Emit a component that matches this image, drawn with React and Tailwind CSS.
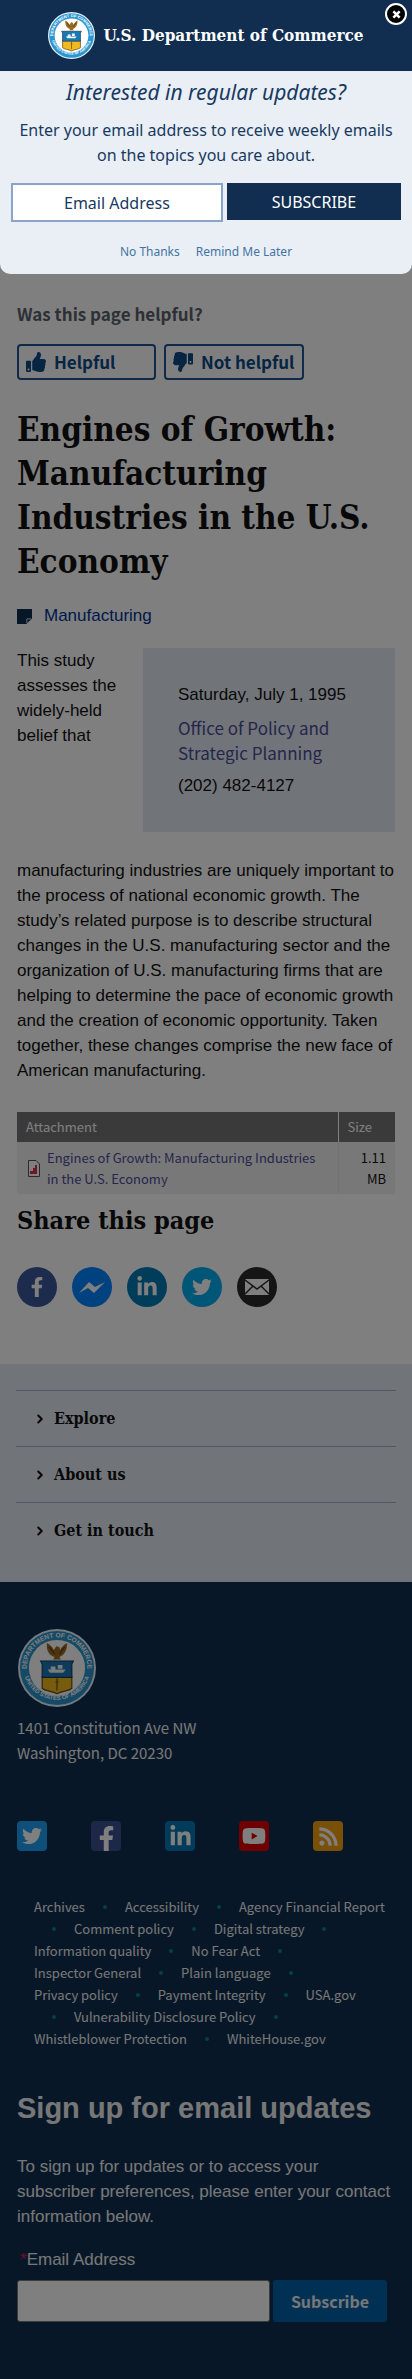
import { FaFacebookF, FaLinkedinIn, FaTwitter, FaYoutube, FaRss, FaThumbsUp, FaThumbsDown } from "react-icons/fa";
import { ChevronRight } from "lucide-react";

const serif = "font-['DejaVu_Serif_Condensed','DejaVu_Serif',serif]";
const source = "font-['Noto_Sans_CJK_SC',sans-serif]";

function Seal({ id, className }) {
  return (
    <svg viewBox="0 0 100 100" className={className} role="img" aria-label="Department of Commerce seal">
      <defs>
        <path id={id + "-top"} d="M11.500 56 A39 39 0 1 1 88.500 56" />
        <path id={id + "-bottom"} d="M9 62 A43.500 43.500 0 0 0 91 62" />
      </defs>
      <circle cx="50" cy="50" r="50" fill="#e9f4fa" />
      <circle cx="50" cy="50" r="47.500" fill="#2b95cf" />
      <circle cx="50" cy="50" r="36" fill="#fff" />
      <g fill="#fff" fontSize="8.500" fontWeight="700" fontFamily="Liberation Sans, sans-serif" textAnchor="middle">
        <text><textPath href={"#" + id + "-top"} startOffset="50%">DEPARTMENT OF COMMERCE</textPath></text>
        <text fontSize="7.500"><textPath href={"#" + id + "-bottom"} startOffset="50%">UNITED STATES OF AMERICA</textPath></text>
      </g>
      <path d="M37 18 C41 20 44 23 46 27 L49 22 L53 23 L54 27 C56 23 59 20 63 18 C63 28 59 34 53 36 L55 39 H45 L47 36 C40 34 36 28 37 18 Z" fill="#9a6a25" />
      <path d="M40 23 L47 32 M60 23 L53 32" stroke="#5b3c14" strokeWidth="1.500" />
      <path d="M31 61 H69 V76 C65 80 57 79 50 83 C43 79 35 80 31 76 Z" fill="#f0b91d" stroke="#5b4a1c" strokeWidth="1.500" />
      <path d="M29 41 H71 L69 45 V62 H31 V45 Z" fill="#1a79b5" stroke="#173d5c" strokeWidth="1.500" />
      <path d="M38 52 H61 L58 56 H41 Z M42 48 H48 V52 H42 Z M51 46 H57 V51 H51 Z" fill="#f2f6f8" />
      <path d="M50 63 V79 M48 68 H52" stroke="#8a6413" strokeWidth="2" />
    </svg>
  );
}

function Popup() {
  return (
    <section role="dialog" aria-label="Email updates" className="absolute inset-x-0 top-0 z-20 overflow-hidden rounded-b-[10px] bg-[#e9eff5] pb-3 text-center font-['Noto_Sans',sans-serif] text-[#183a62]">
      <header className="flex h-[71px] items-center justify-center gap-2 bg-[#112e51]">
        <Seal id="popup-seal" className="size-[47px]" />
        <span className={`${serif} text-[17px] font-bold text-white`}>U.S. Department of Commerce</span>
      </header>
      <button type="button" aria-label="Close" className="absolute top-[3px] right-[5px] flex size-[22px] items-center justify-center rounded-full border-2 border-white bg-black">
        <svg viewBox="0 0 10 10" className="size-[9px]"><path d="M1.500 1.500 L8.500 8.500 M8.500 1.500 L1.500 8.500" stroke="#fff" strokeWidth="2.800" /></svg>
      </button>
      <h2 className="mt-[7px] text-[21px] leading-[28px] italic">Interested in regular updates?</h2>
      <p className="mt-3 px-2 text-[16px] leading-[25px]">Enter your email address to receive weekly emails on the topics you care about.</p>
      <form className="mt-[15px] flex items-start gap-1 px-[11px]" onSubmit={(e) => e.preventDefault()}>
        <input type="email" aria-label="Email Address" placeholder="Email Address" className="h-[39px] w-0 flex-[210] border-2 border-[#8ba4c9] bg-white text-center text-[16px] placeholder:text-[#183a62]" />
        <button type="submit" className="h-[37px] flex-[176] bg-[#112e51] text-[16px] text-white">SUBSCRIBE</button>
      </form>
      <div className="mt-5 flex justify-center gap-4 text-[12px] leading-5 text-[#4474a3]">
        <a href="#no">No Thanks</a>
        <a href="#later">Remind Me Later</a>
      </div>
    </section>
  );
}

const share = [
  ["Facebook", "bg-[#3b5998]", <FaFacebookF className="size-5" />],
  ["Messenger", "bg-[#0084ff]", <svg viewBox="0 0 28 14" className="w-7" fill="currentColor"><path d="M1 13 L11 2 L17 7 L27 2 L16 13 L10 8 Z" /></svg>],
  ["LinkedIn", "bg-[#007bb5]", <FaLinkedinIn className="size-[22px]" />],
  ["Twitter", "bg-[#00aced]", <FaTwitter className="size-5" />],
  ["Email", "bg-[#2b2b2b]", <svg viewBox="0 0 26 18" className="w-[26px]"><rect x="1" y="1" width="24" height="16" rx="1" fill="#fff" /><path d="M1 2 L13 11 L25 2 M1 16 L9 8 M25 16 L17 8" fill="none" stroke="#2b2b2b" strokeWidth="1.500" /></svg>],
];

const social = [
  ["Twitter", "bg-[#1da1f2]", <FaTwitter className="size-5" />],
  ["Facebook", "bg-[#3b4f8f]", <FaFacebookF className="mt-[5px] size-[25px]" />],
  ["LinkedIn", "bg-[#0077b5]", <FaLinkedinIn className="size-[23px]" />],
  ["YouTube", "bg-[#dd0000]", <FaYoutube className="size-6" />],
  ["RSS", "bg-[#f0a010]", <FaRss className="size-[21px]" />],
];

const links = ["Archives", "Accessibility", "Agency Financial Report", "Comment policy", "Digital strategy", "Information quality", "No Fear Act", "Inspector General", "Plain language", "Privacy policy", "Payment Integrity", "USA.gov", "Vulnerability Disclosure Policy", "Whistleblower Protection", "WhiteHouse.gov"];

function Article() {
  return (
    <main className="px-[17px] pt-[302px] pb-[57px] text-[#111]">
      <h2 className={`${source} text-[17px] leading-6 font-bold text-[#5b616b]`}>Was this page helpful?</h2>
      <div className="mt-[18px] flex gap-2">
        <button type="button" className={`${source} flex h-9 w-[139px] items-center gap-2 rounded border-2 border-[#205493] px-[7px] text-[17px] leading-5 font-bold text-[#0b4a85]`}>
          <FaThumbsUp className="size-5 shrink-0" />Helpful
        </button>
        <button type="button" className={`${source} flex h-9 w-[140px] items-center gap-2 rounded border-2 border-[#205493] px-[7px] text-[17px] leading-5 font-bold whitespace-nowrap text-[#0b4a85]`}>
          <FaThumbsDown className="size-5 shrink-0 -scale-x-100" />Not helpful
        </button>
      </div>
      <h1 className={`${serif} mt-7 text-[33px] leading-[44px] font-bold`}>Engines of Growth: Manufacturing Industries in the U.S. Economy</h1>
      <div className="mt-5 flex items-center gap-3">
        <svg viewBox="0 0 16 16" className="size-[15px]"><path d="M0 0 H16 V10 L10 16 H0 Z" fill="#112e51" /><path d="M10.500 15 V10.500 H15" fill="none" stroke="#dde" /></svg>
        <a href="#manufacturing" className="text-[17px] leading-6 text-[#003399]">Manufacturing</a>
      </div>
      <div className="mt-5 text-[17px] leading-[25px]">
        <aside className="float-right mb-[26px] ml-6 flex h-[184px] w-2/3 flex-col gap-2 bg-[#e2ebf3] px-[35px] pt-[34px]">
          <span>Saturday, July 1, 1995</span>
          <a href="#office" className={`${source} text-[17px] leading-[25px] text-[#4c4c99]`}>Office of Policy and Strategic Planning</a>
          <a href="tel:2024824127">(202) 482-4127</a>
        </aside>
        <p>This study assesses the widely-held belief that manufacturing industries are uniquely important to the process of national economic growth. The study’s related purpose is to describe structural changes in the U.S. manufacturing sector and the organization of U.S. manufacturing firms that are helping to determine the pace of economic growth and the creation of economic opportunity. Taken together, these changes comprise the new face of American manufacturing.</p>
      </div>
      <table className={`${source} mt-[29px] w-full text-[13px]`}>
        <thead className="bg-[#757575] text-left text-white">
          <tr>
            <th className="h-[30px] border-r border-white px-[9px] font-normal">Attachment</th>
            <th className="w-[57px] px-[9px] font-normal">Size</th>
          </tr>
        </thead>
        <tbody className="bg-[#f1f1f1]">
          <tr>
            <td className="border-r border-[#e4e4e4] px-[11px] py-[5px]">
              <div className="flex items-center gap-[7px]">
                <svg viewBox="0 0 12 17" className="h-[17px] w-3 shrink-0"><path d="M.5 .5 H8 L11.500 4 V16.500 H.5 Z" fill="#fff" stroke="#555" /><path d="M2 14 V11 H5 V8 H7 V5 H9 V14 Z" fill="#d8304a" /></svg>
                <a href="#pdf" className="leading-[21px] text-[#4c4c99]">Engines of Growth: Manufacturing Industries in the U.S. Economy</a>
              </div>
            </td>
            <td className="px-[9px] py-[5px] text-right leading-[21px]">1.11 MB</td>
          </tr>
        </tbody>
      </table>
      <h2 className={`${serif} mt-3 text-[25px] leading-[30px] font-bold`}>Share this page</h2>
      <div className="mt-[31px] flex gap-[15px]">
        {share.map(([name, color, icon]) => (
          <a key={name} href={"#" + name} aria-label={name} className={`flex size-10 items-center justify-center rounded-full text-white ${color}`}>{icon}</a>
        ))}
      </div>
    </main>
  );
}

function Footer() {
  return (
    <footer className={`${source} flex-1 bg-[#112e51] px-[17px] pt-[47px] pb-[56px] text-[#eee]`}>
      <Seal id="footer-seal" className="ml-px size-[78px]" />
      <address className="mt-2 text-[15px] leading-[25px] not-italic">1401 Constitution Ave NW<br />Washington, DC 20230</address>
      <div className="mt-[56px] flex gap-11">
        {social.map(([name, color, icon]) => (
          <a key={name} href={"#" + name} aria-label={name} className={`flex size-[30px] items-center justify-center overflow-hidden rounded text-white ${color}`}>{icon}</a>
        ))}
      </div>
      <ul className="mt-[45px] flex flex-wrap items-center pr-1 pl-[17px] text-[13px] leading-[22px]">
        {links.flatMap((name, i) => [
          i > 0 && <li key={name + "-dot"} aria-hidden="true" className="mx-[18px] size-1 rounded-full bg-[#02858f]" />,
          <li key={name}><a href={"#" + name}>{name}</a></li>,
        ])}
      </ul>
      <form className="mt-10 font-['Liberation_Sans',Arial,sans-serif]" onSubmit={(e) => e.preventDefault()}>
        <h2 className="text-[29px] leading-[36px] font-bold">Sign up for email updates</h2>
        <p className="mt-7 text-[17px] leading-[25px]">To sign up for updates or to access your subscriber preferences, please enter your contact information below.</p>
        <label htmlFor="footer-email" className="mt-[18px] block pl-[3px] text-[17px] leading-[25px]"><span className="text-[#e31c3d]">*</span>Email Address</label>
        <div className="mt-2 flex gap-[3px] pr-[8px]">
          <input id="footer-email" type="email" className="h-[42px] w-0 flex-1 rounded-[3px] border border-[#777] bg-white px-2 text-black" />
          <button type="submit" className={`${source} h-[42px] w-[114px] rounded-[3px] bg-[#0061a8] text-[16px] font-bold`}>Subscribe</button>
        </div>
      </form>
    </footer>
  );
}

export default function App() {
  return (
    <div className="relative flex min-h-screen flex-col bg-white font-['Liberation_Sans',Arial,sans-serif]">
      <Popup />
      <div aria-hidden="true" className="pointer-events-none absolute inset-0 z-10 bg-black/50" />
      <Article />
      <nav aria-label="Footer sections" className="bg-[#e2ebf3] px-4 pt-[26px] pb-6">
        {["Explore", "About us", "Get in touch"].map((name) => (
          <button key={name} type="button" className={`${serif} flex h-14 w-full items-center gap-[7px] border-t border-[#a0adc4] pl-[17px] text-left text-[16px] font-bold text-[#111]`}>
            <ChevronRight className="size-[14px]" strokeWidth={3.5} />{name}
          </button>
        ))}
      </nav>
      <Footer />
    </div>
  );
}
